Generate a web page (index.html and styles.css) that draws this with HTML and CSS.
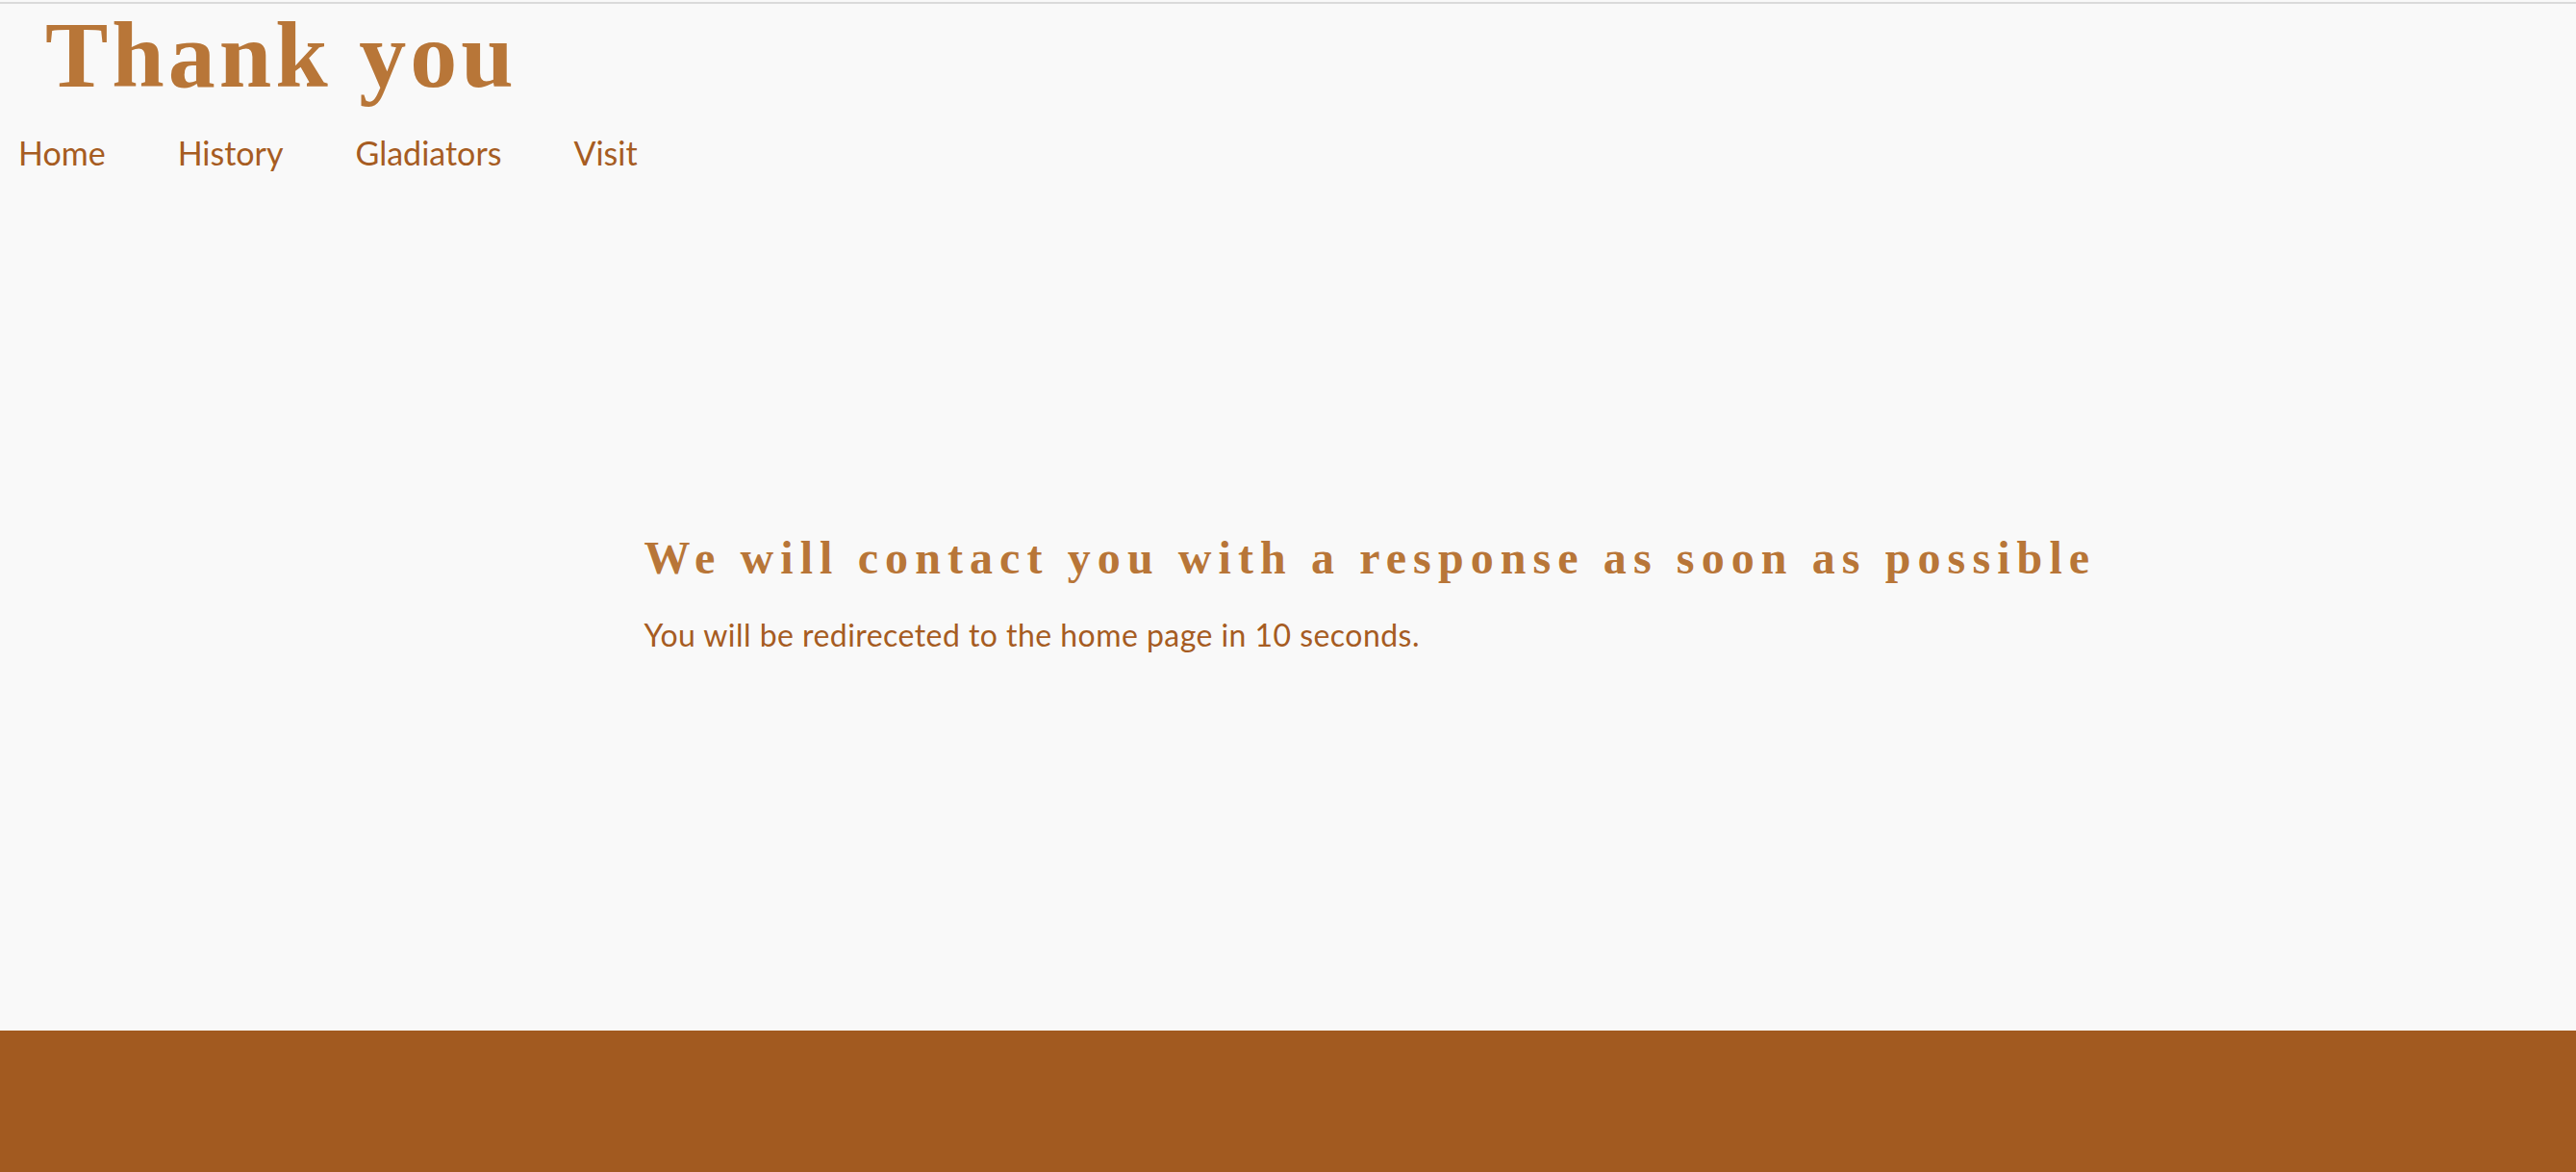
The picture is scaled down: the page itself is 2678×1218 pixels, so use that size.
FILE: index.html
```html
<!DOCTYPE html>
<html lang="en">
<head>
<meta charset="utf-8">
<title>Thank you</title>
<link rel="stylesheet" href="styles.css">
</head>
<body>
<header class="site-header">
  <h1 class="site-title">Thank you</h1>
  <nav class="site-nav">
    <ul class="nav-list">
      <li><a class="nav-link" href="#">Home</a></li>
      <li><a class="nav-link" href="#">History</a></li>
      <li><a class="nav-link" href="#">Gladiators</a></li>
      <li><a class="nav-link" href="#">Visit</a></li>
    </ul>
  </nav>
</header>
<main class="site-main">
  <section class="content">
    <h2 class="content-title">We will contact you with a response as soon as possible</h2>
    <p class="content-text">You will be redireceted to the home page in 10 seconds.</p>
  </section>
</main>
<footer class="site-footer"></footer>
</body>
</html>
```

FILE: styles.css
```css
html, body {
  margin: 0;
  padding: 0;
}

body {
  background: #f9f9f9;
  padding-top: 2px;
  min-height: 100vh;
  box-sizing: border-box;
  display: flex;
  flex-direction: column;
}

.site-header {
  border-top: 2px solid #dadada;
}

.site-title {
  margin: 4px 0 0 47px;
  font-family: "Liberation Serif", serif;
  font-weight: bold;
  font-size: 98px;
  line-height: 1;
  letter-spacing: 4px;
  color: #b87638;
}

.site-nav {
  margin-top: 33px;
  padding-left: 19px;
}

.nav-list {
  list-style: none;
  margin: 0;
  padding: 0;
  display: flex;
  gap: 75px;
}

.nav-link {
  font-family: Lato, "Liberation Sans", sans-serif;
  font-size: 34px;
  line-height: 1.2;
  color: #a65c22;
  text-decoration: none;
  display: block;
}

.site-main {
  flex: 1;
  padding-top: 371px;
}

.content {
  width: 50%;
  margin: 0 auto;
}

.content-title {
  margin: 0;
  font-family: "Liberation Serif", serif;
  font-weight: bold;
  font-size: 48px;
  line-height: 1.2;
  letter-spacing: 7.1px;
  color: #b87638;
  white-space: nowrap;
}

.content-text {
  margin: 33px 0 0;
  font-family: Lato, "Liberation Sans", sans-serif;
  font-size: 32px;
  line-height: 1.2;
  letter-spacing: 0.45px;
  color: #a65c22;
}

.site-footer {
  height: 147px;
  background: #a25a20;
}
```
